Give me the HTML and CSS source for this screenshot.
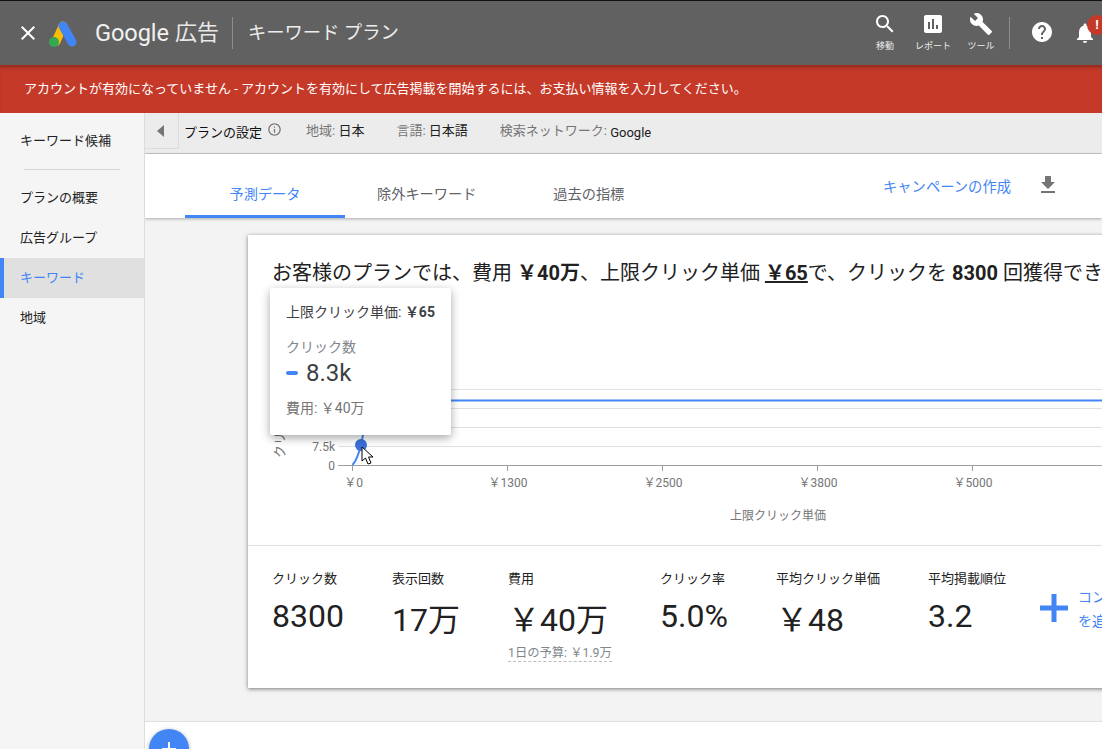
FILE: index.html
```html
<!DOCTYPE html>
<html lang="ja">
<head>
<meta charset="utf-8">
<title>キーワード プラン</title>
<link rel="stylesheet" href="styles.css">
</head>
<body>
<header class="topbar">
  <svg class="close-icon" viewBox="0 0 24 24"><path d="M19 6.41L17.59 5 12 10.59 6.41 5 5 6.41 10.59 12 5 17.59 6.41 19 12 13.41 17.59 19 19 17.59 13.41 12z"/></svg>
  <svg class="logo" viewBox="0 0 28 27">
    <line x1="7" y1="21.5" x2="14" y2="6" stroke="#fbbc04" stroke-width="9" stroke-linecap="round"/>
    <line x1="14" y1="6" x2="23" y2="22" stroke="#4285f4" stroke-width="9" stroke-linecap="round"/>
    <circle cx="5" cy="22" r="5" fill="#34a853"/>
  </svg>
  <span class="brand">Google</span>
  <span class="brand-jp">広告</span>
  <span class="top-divider"></span>
  <span class="page-title">キーワード プラン</span>
  <div class="tools">
    <div class="tool"><svg viewBox="0 0 24 24"><path d="M15.5 14h-.79l-.28-.27C15.41 12.59 16 11.11 16 9.5 16 5.91 13.09 3 9.5 3S3 5.91 3 9.5 5.91 16 9.5 16c1.61 0 3.09-.59 4.23-1.57l.27.28v.79l5 4.99L20.49 19l-4.99-5zm-6 0C7.01 14 5 11.99 5 9.5S7.01 5 9.5 5 14 7.01 14 9.5 11.99 14 9.5 14z"/></svg><span>移動</span></div>
    <div class="tool"><svg viewBox="0 0 24 24"><path d="M19 3H5c-1.1 0-2 .9-2 2v14c0 1.1.9 2 2 2h14c1.1 0 2-.9 2-2V5c0-1.1-.9-2-2-2zM9 17H7v-7h2v7zm4 0h-2V7h2v10zm4 0h-2v-4h2v4z"/></svg><span>レポート</span></div>
    <div class="tool"><svg viewBox="0 0 24 24"><path d="M22.7 19l-9.1-9.1c.9-2.3.4-5-1.5-6.9-2-2-5-2.4-7.4-1.3L9 6 6 9 1.6 4.7C.4 7.1.9 10.1 2.9 12.1c1.9 1.9 4.6 2.4 6.9 1.5l9.1 9.1c.4.4 1 .4 1.4 0l2.3-2.3c.5-.4.5-1.1.1-1.4z"/></svg><span>ツール</span></div>
    <span class="top-divider tools-divider"></span>
    <svg class="help" viewBox="0 0 24 24"><path d="M12 2C6.48 2 2 6.48 2 12s4.48 10 10 10 10-4.48 10-10S17.52 2 12 2zm1 17h-2v-2h2v2zm2.07-7.75l-.9.92C13.45 12.9 13 13.5 13 15h-2v-.5c0-1.1.45-2.1 1.17-2.83l1.24-1.26c.37-.36.59-.86.59-1.41 0-1.1-.9-2-2-2s-2 .9-2 2H8c0-2.21 1.79-4 4-4s4 1.79 4 4c0 .88-.36 1.68-.93 2.25z"/></svg>
    <div class="bell">
      <svg viewBox="0 0 24 24"><path d="M12 22c1.1 0 2-.9 2-2h-4c0 1.1.89 2 2 2zm6-6v-5c0-3.07-1.64-5.64-4.5-6.32V4c0-.83-.67-1.5-1.5-1.5s-1.5.67-1.5 1.5v.68C7.63 5.36 6 7.92 6 11v5l-2 2v1h16v-1l-2-2z"/></svg>
      <span class="badge">!</span>
    </div>
  </div>
</header>
<div class="banner">アカウントが有効になっていません - アカウントを有効にして広告掲載を開始するには、お支払い情報を入力してください。</div>
<div class="workspace">
  <nav class="sidebar">
    <a class="nav-item first">キーワード候補</a>
    <div class="nav-divider"></div>
    <a class="nav-item">プランの概要</a>
    <a class="nav-item">広告グループ</a>
    <a class="nav-item active">キーワード</a>
    <a class="nav-item">地域</a>
  </nav>
  <main class="main">
    <div class="settings">
      <button class="collapse"><span class="tri"></span></button>
      <span class="settings-title">プランの設定</span>
      <svg class="info" viewBox="0 0 24 24"><path d="M11 7h2v2h-2zm0 4h2v6h-2zm1-9C6.48 2 2 6.48 2 12s4.48 10 10 10 10-4.48 10-10S17.52 2 12 2zm0 18c-4.41 0-8-3.59-8-8s3.59-8 8-8 8 3.59 8 8-3.59 8-8 8z"/></svg>
      <span class="setting s1"><em>地域:</em> 日本</span>
      <span class="setting s2"><em>言語:</em> 日本語</span>
      <span class="setting s3"><em>検索ネットワーク:</em> <span class="net">Google</span></span>
    </div>
    <div class="tabs">
      <a class="tab current">予測データ</a>
      <a class="tab t2">除外キーワード</a>
      <a class="tab t3">過去の指標</a>
      <a class="create">キャンペーンの作成</a>
      <svg class="download" viewBox="0 0 24 24"><path d="M19 9h-4V3H9v6H5l7 7 7-7zM5 18v2h14v-2H5z"/></svg>
    </div>
    <div class="content">
      <section class="card">
        <p class="headline">お客様のプランでは、費用 <b>￥40万</b>、上限クリック単価 <b class="under">￥65</b>で、クリックを <b>8300</b> 回獲得できます</p>
        <div class="chart">
          <svg class="chart-svg" width="1000" height="165" viewBox="0 0 1000 165">
            <g class="grid">
              <line x1="90" y1="9.5" x2="1000" y2="9.5"/>
              <line x1="90" y1="28.5" x2="1000" y2="28.5"/>
              <line x1="90" y1="47.5" x2="1000" y2="47.5"/>
              <line x1="90" y1="66.5" x2="1000" y2="66.5"/>
            </g>
            <g class="axis">
              <line x1="90" y1="85.5" x2="1000" y2="85.5"/>
              <line x1="104.5" y1="85" x2="104.5" y2="91"/>
              <line x1="259.5" y1="85" x2="259.5" y2="91"/>
              <line x1="414.5" y1="85" x2="414.5" y2="91"/>
              <line x1="569.5" y1="85" x2="569.5" y2="91"/>
              <line x1="724.5" y1="85" x2="724.5" y2="91"/>
              <line x1="879.5" y1="85" x2="879.5" y2="91"/>
            </g>
            <path class="series" d="M104.5 85 C109 80 111 73 113 65 L118 40 C125 22 140 20.5 200 20.5 L1000 20.5"/>
            <circle class="dot" cx="113" cy="65" r="6"/>
            <text class="tick-y" x="87" y="71">7.5k</text>
            <text class="tick-y" x="87" y="90">0</text>
            <text class="tick-x" x="105.5" y="107">￥0</text>
            <text class="tick-x" x="260" y="107">￥1300</text>
            <text class="tick-x" x="415" y="107">￥2500</text>
            <text class="tick-x" x="570" y="107">￥3800</text>
            <text class="tick-x" x="725" y="107">￥5000</text>
            <text class="axis-x" x="530" y="140">上限クリック単価</text>
            <text class="axis-y" transform="translate(36 78) rotate(-90)">クリック数</text>
          </svg>
        </div>
        <div class="stats">
          <div class="stat"><div class="label">クリック数</div><div class="value">8300</div></div>
          <div class="stat"><div class="label">表示回数</div><div class="value low">17万</div></div>
          <div class="stat"><div class="label">費用</div><div class="value low">￥40万</div><div class="sub">1日の予算: ￥1.9万</div></div>
          <div class="stat"><div class="label">クリック率</div><div class="value">5.0%</div></div>
          <div class="stat"><div class="label">平均クリック単価</div><div class="value low">￥48</div></div>
          <div class="stat"><div class="label">平均掲載順位</div><div class="value">3.2</div></div>
          <div class="add-metric">
            <svg viewBox="5 5 14 14"><path d="M19 13.25h-5.75V19h-2.5v-5.75H5v-2.5h5.75V5h2.5v5.75H19z"/></svg>
            <span>コンバージョン<br>を追加</span>
          </div>
        </div>
        <div class="tooltip">
          <div class="tip-head">上限クリック単価: <b>￥65</b></div>
          <div class="tip-label">クリック数</div>
          <div class="tip-value"><i></i>8.3k</div>
          <div class="tip-foot">費用: ￥40万</div>
        </div>
        <svg class="pointer" viewBox="0 0 14 20"><path d="M1 1 L1 15 L4.5 12 L7 18 L10 17 L7.5 11 L12 11 Z"/></svg>
      </section>
    </div>
    <footer class="footer"></footer>
    <button class="fab"><svg viewBox="0 0 24 24"><path d="M19 13h-6v6h-2v-6H5v-2h6V5h2v6h6v2z"/></svg></button>
  </main>
</div>
</body>
</html>
```
FILE: styles.css
```css
* { box-sizing: border-box; }
html, body { margin: 0; height: 100%; }
body {
  width: 1102px;
  height: 749px;
  overflow: hidden;
  display: flex;
  flex-direction: column;
  font-family: Roboto, "Noto Sans CJK JP", sans-serif;
  font-size: 13px;
  color: #212121;
  background: #fff;
}

/* top bar */
.topbar {
  height: 65px;
  flex: none;
  display: flex;
  align-items: center;
  background: #616161;
  border-top: 1px solid #111;
  color: #fff;
  padding-left: 16px;
}
.close-icon { width: 24px; height: 24px; fill: #fff; flex: none; }
.logo { width: 28px; height: 27px; margin-left: 9px; flex: none; }
.brand { margin-left: 18px; font-size: 23.6px; line-height: 30px; letter-spacing: -0.1px; font-weight: 400; color: #f1f1f1; }
.brand-jp { margin-left: 6px; font-size: 22px; line-height: 30px; color: #e8e8e8; }
.top-divider { width: 1px; height: 32px; background: #8d8d8d; margin-left: 13px; flex: none; }
.page-title { margin-left: 15px; font-size: 18.3px; line-height: 30px; font-weight: 400; color: #eee; white-space: nowrap; }
.tools { margin-left: auto; display: flex; align-items: center; padding-right: 5px; }
.tool { width: 48px; display: flex; flex-direction: column; align-items: center; margin-top: -2px; }
.tool svg { width: 24px; height: 24px; fill: #fff; }
.tool span { font-size: 9px; line-height: 12px; margin-top: 4px; color: #eee; white-space: nowrap; }
.tools-divider { margin-left: 4px; }
.help { width: 24px; height: 24px; fill: #fff; margin-left: 20px; margin-top: -2px; }
.bell { position: relative; width: 24px; height: 24px; margin-left: 19px; }
.bell svg { width: 24px; height: 24px; fill: #fff; display: block; }
.badge {
  position: absolute;
  left: 14px;
  top: -6px;
  width: 20px;
  height: 20px;
  border-radius: 50%;
  background: #c53929;
  color: #fff;
  font-size: 13px;
  font-weight: 700;
  line-height: 20px;
  text-align: center;
}

/* banner */
.banner {
  height: 48px;
  flex: none;
  background: #c53929;
  box-shadow: inset 0 5px 4px -3px rgba(0,0,0,.3);
  color: #fff;
  font-size: 13px;
  line-height: 48px;
  padding-left: 24px;
  white-space: nowrap;
}

/* layout */
.workspace { flex: 1; display: flex; min-height: 0; }
.sidebar {
  width: 145px;
  flex: none;
  background: #f5f5f5;
  border-right: 1px solid #dcdcdc;
  padding-top: 8px;
}
.nav-item {
  display: block;
  height: 40px;
  line-height: 40px;
  padding-left: 20px;
  font-size: 13px;
  color: #212121;
  white-space: nowrap;
}
.nav-divider { height: 1px; margin: 8px 24px; background: #d5d5d5; }
.nav-item.active {
  background: #e0e0e0;
  color: #4285f4;
  border-left: 4px solid #4285f4;
  padding-left: 16px;
}

.main { flex: 1; min-width: 0; position: relative; display: flex; flex-direction: column; background: #f3f3f3; overflow: hidden; }

/* settings */
.settings {
  height: 41px;
  flex: none;
  display: flex;
  align-items: flex-start;
  background: #ececec;
  border-bottom: 1px solid #c8c8c8;
  white-space: nowrap;
  line-height: 40px;
}
.collapse {
  width: 34px;
  height: 36px;
  padding: 0 0 0 12px;
  border: 0;
  border-right: 1px solid #dcdcdc;
  border-bottom: 1px solid #dcdcdc;
  background: #ececec;
  display: flex;
  align-items: center;
  flex: none;
}
.tri { width: 0; height: 0; border-style: solid; border-width: 6.5px 7px 6.5px 0; border-color: transparent #757575 transparent transparent; }
.settings-title { margin-left: 5px; font-size: 13px; color: #111; }
.info { width: 15px; height: 15px; fill: #757575; margin-left: 5px; margin-top: 9px; flex: none; }
.setting { font-size: 13px; color: #212121; margin-top: -2px; }
.setting em { font-style: normal; color: #757575; }
.net { font-size: 13px; position: relative; top: 2px; }
.s1 { margin-left: 24px; }
.s2 { margin-left: 32px; }
.s3 { margin-left: 32px; }

/* tabs */
.tabs {
  height: 64px;
  flex: none;
  display: flex;
  align-items: center;
  background: #fff;
  box-shadow: 0 1px 3px rgba(0,0,0,.3);
  padding-left: 40px;
  position: relative;
  z-index: 1;
}
.tab { font-size: 14.2px; color: #5f6368; white-space: nowrap; align-self: stretch; line-height: 80px; height: 64px; text-align: center; }
.current { width: 160px; color: #4285f4; border-bottom: 3px solid #4285f4; }
.t2 { margin-left: 32px; }
.t3 { margin-left: 77px; }
.create { margin-left: auto; font-size: 14.3px; color: #4285f4; white-space: nowrap; transform: translateY(-1px); margin-right: 25px; }
.download { width: 24px; height: 24px; fill: #757575; margin-right: 42px; flex: none; transform: translateY(-1px); }

/* content */
.content { flex: 1; min-height: 0; padding: 17px 0 0 103px; overflow: hidden; }
.card {
  position: relative;
  width: 1000px;
  height: 453px;
  background: #fff;
  box-shadow: 0 1px 4px rgba(0,0,0,.5);
}
.headline {
  margin: 0;
  height: 145px;
  padding: 24px 0 0 24px;
  font-size: 20px;
  line-height: 28px;
  color: #212121;
  white-space: nowrap;
}
.headline b { font-size: 20px; font-weight: 700; }
.under { text-decoration: underline; }
.chart { height: 165px; }
.chart-svg { display: block; }
.grid line { stroke: #e0e0e0; stroke-width: 1; }
.axis line { stroke: #9e9e9e; stroke-width: 1; }
.series { fill: none; stroke: #4285f4; stroke-width: 2; }
.dot { fill: #3a70d8; }
.tick-y { font: 12px Roboto, sans-serif; fill: #757575; text-anchor: end; }
.tick-x { font: 12px Roboto, "Noto Sans CJK JP", sans-serif; fill: #757575; text-anchor: middle; }
.axis-x { font: 12px Roboto, "Noto Sans CJK JP", sans-serif; fill: #757575; text-anchor: middle; }
.axis-y { font: 13px Roboto, "Noto Sans CJK JP", sans-serif; fill: #757575; }

.stats {
  height: 143px;
  border-top: 1px solid #e0e0e0;
  display: grid;
  grid-template-columns: 120px 116px 152px 116px 152px 112px 1fr;
  padding: 24px 0 0 24px;
}
.label { font-size: 13px; line-height: 18px; color: #212121; white-space: nowrap; }
.value { font-size: 32px; line-height: 40px; margin-top: 8px; color: #212121; white-space: nowrap; }
.value.low { margin-top: 12px; }
.sub {
  display: inline-block;
  margin-top: 6px;
  font-size: 12.3px;
  line-height: 15px;
  color: #80868b;
  border-bottom: 1px dashed #bdbdbd;
  white-space: nowrap;
}
.add-metric { display: flex; align-items: flex-start; font-size: 14px; line-height: 24px; color: #4285f4; white-space: nowrap; }
.add-metric svg { width: 28px; height: 28px; fill: #4285f4; flex: none; margin-top: 24px; margin-right: 10px; }
.add-metric span { margin-top: 15px; }

/* tooltip */
.tooltip {
  position: absolute;
  left: 22px;
  top: 53px;
  width: 181px;
  height: 147px;
  padding: 15px 16px;
  background: #fff;
  border-radius: 2px;
  box-shadow: 0 3px 10px rgba(0,0,0,.35);
  white-space: nowrap;
}
.tip-head { font-size: 14px; line-height: 18px; color: #3c4043; }
.tip-head b { font-size: 14px; font-weight: 700; }
.tip-label { font-size: 14px; line-height: 18px; color: #80868b; margin-top: 17px; }
.tip-value { display: flex; align-items: center; font-size: 24px; line-height: 30px; margin-top: 2px; color: #3c4043; }
.tip-value i { width: 12px; height: 4px; border-radius: 2px; background: #4285f4; margin-right: 8px; }
.tip-foot { font-size: 14px; line-height: 18px; color: #757575; margin-top: 11px; }

.pointer { position: absolute; left: 113px; top: 211px; width: 14px; height: 20px; fill: #fff; stroke: #000; stroke-width: 1; }

/* footer */
.footer { height: 28px; flex: none; background: #fff; border-top: 1px solid #e0e0e0; }
.fab {
  position: absolute;
  left: 4px;
  top: 616px;
  width: 40px;
  height: 40px;
  padding: 8px;
  border: 0;
  border-radius: 50%;
  background: #4285f4;
  box-shadow: 0 1px 4px rgba(0,0,0,.35);
}
.fab svg { display: block; width: 24px; height: 24px; fill: #fff; }
```
